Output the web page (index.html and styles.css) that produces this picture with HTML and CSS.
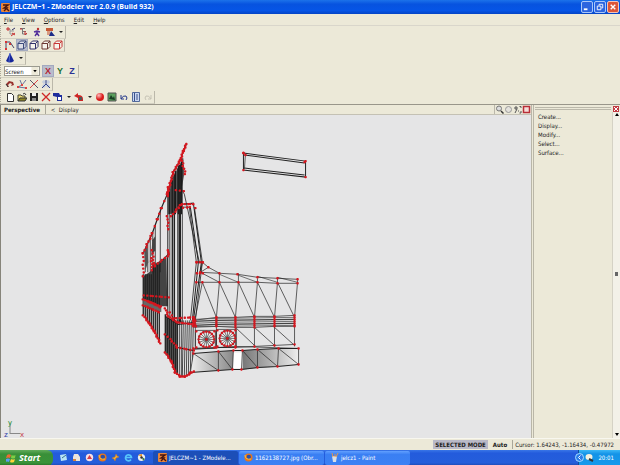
FILE: index.html
```
<!DOCTYPE html>
<html lang="en">
<head>
<meta charset="utf-8">
<title>JELCZM~1 - ZModeler</title>
<link rel="stylesheet" href="styles.css">
</head>
<body>
<svg class="defs" aria-hidden="true">
  <defs>
    <linearGradient id="panelA"><stop offset="0" stop-color="#eee"/><stop offset="1" stop-color="#888"/></linearGradient>
    <linearGradient id="panelB"><stop offset="0" stop-color="#777"/><stop offset="1" stop-color="#eee"/></linearGradient>
    <radialGradient id="ball" cx=".35" cy=".3"><stop offset="0" stop-color="#fbb"/><stop offset="1" stop-color="#d91c1c"/></radialGradient>
  </defs>
  <symbol id="app" viewBox="0 0 9 9"><rect width="9" height="9" rx="1" fill="#e8853a"/><path d="M2 2h5L3 5h3L3 8M6 6l2 2" stroke="#451510" stroke-width="1.4" fill="none"/></symbol>
  <symbol id="cube" viewBox="0 0 10 10"><path d="M1 3.500h5.500v5.500H1zM1 3.500L3.500 1H9L6.500 3.500M9 1v5.500L6.500 9" fill="#fff" fill-opacity=".5" stroke="currentColor"/></symbol>
  <symbol id="fire" viewBox="0 0 9 9"><circle cx="4.500" cy="4.500" r="4" fill="#e8771c"/><circle cx="4.800" cy="4" r="2.200" fill="#2b4fa8"/><path d="M1 2q0 5 6 4" stroke="#ffc23c" fill="none"/></symbol>
</svg>
<div class="app">
  <header class="title">
    <svg class="i9"><use href="#app"/></svg>
    <h1>JELCZM~1 - ZModeler ver 2.0.9 (Build 932)</h1>
    <button class="win" aria-label="Minimize"><svg viewBox="0 0 11 11"><path d="M2 8h4" stroke="#fff" stroke-width="2"/></svg></button>
    <button class="win" aria-label="Restore"><svg viewBox="0 0 11 11"><path d="M4.500 4V2.500h4v4H7M2.500 4.500h4v4h-4z" stroke="#fff" fill="none"/></svg></button>
    <button class="win close" aria-label="Close"><svg viewBox="0 0 11 11"><path d="M3 3l5 5M8 3L3 8" stroke="#fff" stroke-width="1.500"/></svg></button>
  </header>
  <nav class="menu">
    <button><u>F</u>ile</button><button><u>V</u>iew</button><button><u>O</u>ptions</button><button><u>E</u>dit</button><button><u>H</u>elp</button>
  </nav>
  <div class="bars">
    <div class="bar wide">
      <button aria-label="Vertex tree"><svg viewBox="0 0 10 10"><path d="M1 2h3v5h4M4 4h4" stroke="#999" fill="none"/><path d="M1 1h2v2H1zM6 6l3 2M5 9l4-3" stroke="#c33" fill="none"/><path d="M6 3l3-2" stroke="#336"/></svg></button>
      <button aria-label="Object tree"><svg viewBox="0 0 10 10"><path d="M1 1.500h5M3.500 2v5H8M3.500 4.500H7" stroke="#777" fill="none"/><path d="M1 2h2M6 4v4l2-2" stroke="#c33" fill="none"/></svg></button>
      <button aria-label="Bones"><svg viewBox="0 0 10 10"><circle cx="6" cy="2" r="1.200" fill="#b33"/><path d="M2 5l3-1 3 1M5 4v2L3 9M5 6l2 3" stroke="#53309b" stroke-width="1.400" fill="none"/></svg></button>
      <button aria-label="Materials"><svg viewBox="0 0 10 10"><path d="M1 1h7v3H1z" fill="#c65835"/><path d="M2 4h3v4H2z" fill="#d99a80"/><path d="M4 9l2-5 4 5z" fill="#1c2c87"/></svg></button>
      <span class="drop"></span>
    </div>
    <div class="bar">
      <button aria-label="Vertices"><svg viewBox="0 0 10 10"><path d="M1 9V2h4l4 6" stroke="#446" fill="none"/><path d="M0 1h2v2H0zM4 3h2v2H4zM0 8h2v2H0z" fill="#d33"/></svg></button>
      <button class="on" aria-label="Edges"><svg class="blue"><use href="#cube"/></svg></button>
      <button aria-label="Faces"><svg class="navy"><use href="#cube"/></svg></button>
      <button aria-label="Polygons"><svg class="brown"><use href="#cube"/></svg></button>
      <button aria-label="Objects"><svg class="red"><use href="#cube"/></svg></button>
    </div>
    <div class="bar">
      <button aria-label="Solid"><svg viewBox="0 0 10 10"><path d="M5 0L1 8q4 3 8 0z" fill="#16269a"/><path d="M5 0L4 9" stroke="#4c66cf"/></svg></button>
      <span class="drop"></span>
    </div>
    <div class="bar axes">
      <label class="combo"><select aria-label="Coordinate system"><option>Screen</option></select><svg viewBox="0 0 8 9"><path d="M0 0h8v9H0z" fill="#ece9d8"/><path d="M2 3.500h4L4 6z"/></svg></label>
      <button class="on x">X</button><button class="y">Y</button><button class="z">Z</button>
    </div>
    <div class="bar">
      <button aria-label="Magnet"><svg viewBox="0 0 10 10"><path d="M3 8L1 5l3-3 4 1 1 3-3 1 1-2-2-1-2 2 1 2z" fill="#97322e"/><path d="M1 5l2 3" stroke="#333"/></svg></button>
      <button aria-label="Snap vertex"><svg viewBox="0 0 10 10"><path d="M3 1l2 5 4-5M5 6L1 8l8 1" stroke="#66709b" fill="none"/><path d="M0 7h2v2H0zM8 8h2v2H8zM4 5h2v2H4z" fill="#d44"/></svg></button>
      <button aria-label="Snap edge"><svg viewBox="0 0 10 10"><path d="M1 1l8 8" stroke="#556"/><path d="M9 1L1 9" stroke="#d44"/></svg></button>
      <button aria-label="Snap grid"><svg viewBox="0 0 10 10"><path d="M1 3h8M1 7h8M3 1v8M7 1v8" stroke="#b9c6e0"/><path d="M5 1v4L1 9M5 5l4 4" stroke="#33448c" fill="none"/></svg></button>
    </div>
    <div class="bar">
      <button aria-label="New"><svg viewBox="0 0 10 10"><path d="M2.500 1.500h4l2 2v6h-6z" fill="#fff" stroke="#333"/></svg></button>
      <button aria-label="Open"><svg viewBox="0 0 10 10"><path d="M1 9V3h3l1 1h3v2" fill="#e7d774" stroke="#443"/><path d="M1 9l2-3h7L8 9z" fill="#8e8524" stroke="#333"/><path d="M6 2q2-2 3 1" stroke="#333" fill="none"/></svg></button>
      <button aria-label="Save"><svg viewBox="0 0 10 10"><path d="M1 1h8v8H1z" fill="#222"/><path d="M3 1h4v3H3z" fill="#eee"/><path d="M3 6h4v3H3z" fill="#888"/></svg></button>
      <button aria-label="Delete"><svg viewBox="0 0 10 10"><path d="M1 1l8 8M9 1L1 9" stroke="#cf2727" stroke-width="1.300"/></svg></button>
      <button aria-label="Import"><svg viewBox="0 0 10 10"><path d="M0 1h6l1 2h2v6H4V5L0 4z" fill="#1e2d9c"/><path d="M5 5h3v3H5z" fill="#fff"/></svg></button>
      <span class="drop"></span>
      <button aria-label="Export"><svg viewBox="0 0 10 10"><path d="M0 4l4-3v2q5 0 5 4v2H4V6z" fill="#cf2525"/><path d="M5 5h3v3H5z" fill="#555"/></svg></button>
      <span class="drop"></span>
      <button aria-label="Record"><svg viewBox="0 0 10 10"><circle cx="5" cy="5" r="4" fill="url(#ball)"/></svg></button>
      <button aria-label="Textures"><svg viewBox="0 0 10 10"><path d="M1 1h8v8H1z" fill="#5aa05d" stroke="#555"/><path d="M2 7l2-4 2 3 1-2 1 4z" fill="#173f24"/></svg></button>
      <button aria-label="Undo"><svg viewBox="0 0 10 10"><path d="M2 3v4h3M2 7q2-4 5-3 2 2 0 4" stroke="#24388b" fill="none"/></svg></button>
      <button aria-label="History"><svg viewBox="0 0 10 10"><path d="M1.500 .5h7v9h-7z" fill="#cad7f1" stroke="#52699b"/><path d="M3.500 1v8M5 3h2M5 5h2M5 7h2" stroke="#3a518a"/></svg></button>
      <button aria-label="Redo" disabled><svg viewBox="0 0 10 10"><path d="M8 3v4H5M8 7Q6 3 3 4 1 6 3 8" stroke="#c6c3b5" fill="none"/></svg></button>
    </div>
  </div>
  <div class="work">
    <main class="view">
      <div class="viewhead">
        <button class="persp">Perspective</button><button class="disp">&lt;&nbsp; Display</button>
        <div class="tools">
          <button aria-label="Zoom"><svg viewBox="0 0 9 9"><circle cx="4" cy="3.500" r="2.500" fill="#ddd" stroke="#777"/><path d="M6 6l2.500 2.500" stroke="#333" stroke-width="1.500"/></svg></button>
          <button aria-label="Pan"><svg viewBox="0 0 9 9"><circle cx="4.500" cy="4.500" r="3" fill="#e4e2dc" stroke="#999"/></svg></button>
          <button aria-label="Fit"><svg viewBox="0 0 9 9"><path d="M2 2h2v2H2zM4 4l-2 4M5 6h1M6.500 1.500h1.500v1.500M8 6v2H6.500" stroke="#555" fill="none"/></svg></button>
          <button aria-label="Maximize view"><svg viewBox="0 0 9 9"><path d="M1.500 1.500h6v6h-6z" fill="#f5dcd8" stroke="#b92d37" stroke-width="1.500"/></svg></button>
        </div>
      </div>
      <svg class="scene" viewBox="1 115 529 322" preserveAspectRatio="xMinYMax meet" role="img" aria-label="Wireframe model">
        <g id="mesh"></g>
        <path d="M10 422v11h10" stroke="#888" fill="none"/>
        <text x="8" y="424" fill="#3b9b4a">y</text><text x="20" y="436" fill="#c33945">x</text><text x="4" y="436" fill="#3546aa">z</text>
      </svg>
    </main>
    <aside class="side">
      <div class="sidehead"><span></span><button aria-label="Close panel"><svg viewBox="0 0 6 6"><path d="M1 1l4 4M5 1L1 5" stroke="#fff"/></svg></button></div>
      <div class="sidebody">
        <div class="cmds"><button>Create...</button><button>Display...</button><button>Modify...</button><button>Select...</button><button>Surface...</button></div>
        <div class="scroll"><svg viewBox="0 0 6 6"><path d="M1 4h4L3 1z"/></svg><i></i><svg viewBox="0 0 6 6"><path d="M1 2h4L3 5z"/></svg></div>
      </div>
    </aside>
  </div>
  <footer class="status"><b class="sel">SELECTED MODE</b><b>Auto</b><span class="cursor">Cursor: 1.64243, -1.16434, -0.47972</span></footer>
  <nav class="task">
    <button class="start"><svg viewBox="0 0 10 10"><path d="M1 2q2-1.500 4 0L4 5Q3 4 0 5z" fill="#ed6a35"/><path d="M5.500 2q2 1 4 0L9 5q-2 1-4 0z" fill="#7fce45"/><path d="M0 6q2-1 4 0L3 9Q2 8-1 9z" fill="#5a9cf5"/><path d="M5 6q2 1 4 0L8 9q-2 1-4 0z" fill="#ffd43a"/></svg>Start</button>
    <div class="quick">
      <button aria-label="Desktop"><svg viewBox="0 0 9 9"><path d="M1 2l6-1 1 6-6 1z" fill="#b9e3f6"/><path d="M3 5l4-3" stroke="#37738f"/></svg></button>
      <button aria-label="Mail"><svg viewBox="0 0 9 9"><path d="M2 1h4l2 3v4H1V4z" fill="#ece5db"/><path d="M1 6h3v2H1z" fill="#d7833b"/></svg></button>
      <button aria-label="Player"><svg viewBox="0 0 9 9"><circle cx="4.500" cy="4.500" r="3.700" fill="#f6dfe4"/><path d="M2 6l2.500-4L7 6z" fill="#d63b47"/></svg></button>
      <button aria-label="Firefox"><svg><use href="#fire"/></svg></button>
      <button aria-label="Winamp"><svg viewBox="0 0 9 9"><path d="M1 5l3-1 1-3 1 2 2 1-3 1-1 3-1-2z" fill="#ffb02d" stroke="#bf7929" stroke-width=".5"/></svg></button>
      <button aria-label="Internet Explorer"><svg viewBox="0 0 9 9"><path d="M7 6.500A3 3 0 1 1 7.500 4.500H2" stroke="#57c5fb" stroke-width="1.700" fill="none"/></svg></button>
      <button aria-label="Media"><svg viewBox="0 0 9 9"><circle cx="4.500" cy="4.500" r="3.600" fill="#eee"/><path d="M1 2l4-1v3z" fill="#e69124"/><path d="M5 4l3 2-2 2z" fill="#377d45"/><circle cx="4.500" cy="4.500" r="1.200" fill="#333"/></svg></button>
    </div>
    <button class="win-tab active"><svg><use href="#app"/></svg>JELCZM~1 - ZModele...</button>
    <button class="win-tab"><svg><use href="#fire"/></svg>1162138727.jpg (Obr...</button>
    <button class="win-tab"><svg viewBox="0 0 9 9"><path d="M2 3h5L6 9H3z" fill="#d8dfe7"/><path d="M3 4L2 0M5 4V1M6 4l2-4" stroke="#e2974c"/></svg>jelcz1 - Paint</button>
    <div class="tray"><button class="chev" aria-label="Show icons"><svg viewBox="0 0 9 9"><circle cx="4.500" cy="4.500" r="4" fill="#2b7ce8" stroke="#a6ddff"/><path d="M5.500 2.500l-2 2 2 2" stroke="#fff" fill="none"/></svg></button><svg viewBox="0 0 9 9"><ellipse cx="4" cy="4" rx="3.500" ry="3" fill="#f5f1df"/><path d="M4 6l4 2" stroke="#343639" stroke-width="2"/></svg><time>20:01</time></div>
  </nav>
</div>
<script src="mesh.js"></script>
</body>
</html>
```
FILE: styles.css
```
* { box-sizing: border-box; }
body { margin: 0; font: 6px/9px "DejaVu Sans Condensed", "DejaVu Sans", sans-serif; color: #222; background: #ece9d8; }
button, select { font: inherit; color: inherit; border: 0; padding: 0; margin: 0; background: none; }
svg { display: block; flex: none; }
.defs { position: absolute; width: 0; height: 0; }
.app { min-height: 100vh; display: flex; flex-direction: column; }

.title { height: 14px; display: flex; align-items: center; gap: 1px; padding: 0 1px; color: #fff; background: linear-gradient(#1c72ea, #0753df 30%, #0655e6 75%, #0444c5); }
.title h1 { flex: 1; margin: 0; padding-left: 1px; font: bold 7px/12px "Open Sans", sans-serif; }
.i9 { width: 9px; height: 9px; }
.win { width: 12px; height: 12px; border: 1px solid #a9c7f8; border-radius: 2px; background: #2c65df; }
.win.close { background: #dc5638; border-color: #f4c4b8; }
.win svg { width: 10px; height: 10px; }

.menu { height: 12px; display: flex; align-items: center; gap: 9px; padding-left: 4px; border-bottom: 1px solid #d9d6cb; }
.menu u { text-decoration-thickness: 1px; }

.bars { display: flex; flex-direction: column; align-items: flex-start; }
.bar { height: 13px; display: flex; align-items: center; padding: 0 0 0 3px; border-right: 1px solid #bbb8aa; border-bottom: 1px solid #d3d0c2; border-left: 1px dotted #aaa697; }
.bar button { width: 12px; height: 12px; display: grid; place-items: center; font: bold 9px/11px "Liberation Sans", sans-serif; }
.bar.wide button { width: 13px; }
.bar svg { width: 10px; height: 10px; }
.bar .on { background: #b9bdcc; outline: 1px solid #a3aabf; outline-offset: -1px; }
.drop { margin: 0 2px 0 3px; border: 2px solid transparent; border-top-color: #222; border-bottom: 0; }
.blue { color: #3b4b7c; } .navy { color: #30306b; } .brown { color: #6c3832; } .red { color: #c73434; }
.bar .x { color: #b32635; } .bar .y { color: #226f2f; } .bar .z { color: #2b3195; }
.combo { width: 36px; height: 10px; display: flex; align-items: center; background: #fff; border: 1px solid #9a9a90; margin-right: 2px; }
.combo select { flex: 1; min-width: 0; appearance: none; }
.combo svg { width: 8px; height: 8px; pointer-events: none; }

.work { flex: 1; display: flex; min-height: 0; border-top: 1px solid #99968a; }
.view { flex: 1; min-width: 0; display: flex; flex-direction: column; border-left: 1px solid #86847a; background: #e5e5e6; }
.viewhead { height: 10px; display: flex; align-items: center; background: #ece9d8; border-bottom: 1px solid #c4c1b4; }
.persp { font-weight: bold; padding: 0 5px 0 3px; border-right: 1px solid #aaa799; }
.disp { padding-left: 5px; }
.tools { margin-left: auto; display: flex; border-left: 1px solid #bbb8aa; }
.tools svg { width: 9px; height: 9px; }
.scene { flex: 1; width: 100%; height: 0; font: 8px "Liberation Sans", sans-serif; }
.side { width: 89px; border-left: 3px double #b9b6a8; display: flex; flex-direction: column; }
.sidehead { display: flex; align-items: center; gap: 2px; height: 7px; padding: 0 1px; }
.sidehead span { flex: 1; height: 3px; border: 1px solid #bbb8aa; border-width: 1px 0; }
.sidehead button { width: 6px; height: 6px; background: #c23a42; }
.sidebody { flex: 1; display: flex; justify-content: space-between; }
.cmds { display: flex; flex-direction: column; align-items: flex-start; padding-left: 4px; }
.cmds button { height: 9px; }
.scroll { width: 8px; display: flex; flex-direction: column; justify-content: space-between; align-items: center; border-left: 1px solid #d5d2c5; padding-bottom: 1px; background: #f3f1e8; }
.scroll svg { width: 6px; height: 6px; }
.scroll i { width: 3px; height: 4px; background: #666; }

.status { height: 12px; display: flex; justify-content: flex-end; align-items: center; gap: 3px; padding-right: 6px; border-top: 1px solid #f8f7ef; }
.status b { padding: 0 2px; }
.status .sel { background: #b9b9c7; }
.cursor { padding-left: 2px; border-left: 1px solid #aaa799; }

.task { height: 16px; display: flex; align-items: stretch; color: #fff; background: linear-gradient(#3976e7, #235bdc 20%, #245edb 80%, #1b47ad); }
.start { width: 53px; display: flex; align-items: center; gap: 3px; padding-left: 6px; font: italic bold 9px/14px "Open Sans", sans-serif; border-radius: 0 6px 6px 0; background: linear-gradient(#62ac5c, #398f38 25%, #3a9339 80%, #246d27); }
.start svg { width: 10px; height: 10px; }
.quick { width: 100px; display: flex; align-items: center; gap: 4px; padding-left: 6px; }
.quick svg, .win-tab svg, .tray svg { width: 9px; height: 9px; }
.win-tab { width: 85px; margin: 1px 1px 1px 0; display: flex; align-items: center; gap: 2px; padding-left: 5px; border-radius: 2px; white-space: nowrap; background: linear-gradient(#62a0ff, #3a7ff3 25%, #3c81f4); }
.win-tab.active { background: #1c4fb8; }
.tray { margin-left: auto; width: 42px; display: flex; align-items: center; gap: 1px; background: linear-gradient(#3cb8f7, #1493e7 25%, #159aec); border-left: 1px solid #104e9c; }
.chev { margin-left: -4px; }
.tray time { margin-left: auto; padding-right: 6px; }
```
FILE: mesh.js
```
const parts = [];
const dots = [];
const line = (pts, w = 1, c = '#222') => parts.push(`<polyline points="${pts.join(' ')}" fill="none" stroke="${c}" stroke-width="${w}"/>`);
const fill = (pts, c) => parts.push(`<polygon points="${pts.join(' ')}" fill="${c}"/>`);
const dot = (x, y) => dots.push(`<rect x="${x - 1.2}" y="${y - 1.2}" width="2.4" height="2.4" rx=".8"/>`);

// Value of y on a polyline at x
function yAt(pts, x) {
  for (let i = 1; i < pts.length; i++) {
    const [a, b] = pts[i - 1], [c, d] = pts[i];
    if (x <= c) return b + (d - b) * (x - a) / (c - a);
  }
  return pts[pts.length - 1][1];
}
// Vertices strung along a polyline, scattered slightly to either side
function string(pts, step) {
  for (let i = 1; i < pts.length; i++) {
    const [a, b] = pts[i - 1], [c, d] = pts[i];
    const n = Math.max(1, Math.round(Math.hypot(c - a, d - b) / step));
    for (let k = 0; k <= n; k++) dot(a + (c - a) * k / n + (k % 3 - 1) * .5, b + (d - b) * k / n);
  }
}

// Side wall of the body
const roof = [[143, 253], [147, 244], [152, 233], [157, 219], [161, 208], [167, 194], [170, 183], [173, 172], [180, 160], [183, 151], [186, 144]];
const sill = [[143, 315], [149, 323], [154, 331], [160, 343]];
fill([[143, 276], [152, 270], [154, 264], [166, 257], [167, 306], [160, 306], [143, 299]], '#444');
for (let x = 143; x < 161; x += 2) line([[x, x < 152 ? 274 : 264], [x, yAt(sill, x)]], 1.3);
for (const x of [145, 147.5, 150, 152.5, 155, 160]) line([[x, yAt(roof, x)], [x, 272]], .8);
line(roof, 1.2);
fill([[144, 251], [147, 244], [148, 262], [145, 270]], '#555');
fill([[152, 240], [155, 236], [155, 250], [151, 256]], '#444');
fill([[168, 190], [172, 178], [183, 158], [184, 174], [181, 190], [181, 206], [174, 213], [168, 214]], '#555');
for (const x of [169, 172, 175, 178, 181]) line([[x, yAt(roof, x) + 2], [x, 214]], 1.3, '#1a1a1a');
fill([[143, 299], [161, 306], [161, 312], [143, 305]], '#666');
line([[160, 262], [167, 255], [167, 306]]);
for (const [x, w] of [[167.5, 1], [169.5, .8], [172, 1.3], [174, 1.5], [177.5, 1], [179.5, 2.4], [182, .8]]) line([[x, yAt(roof, x) + 4], [x, 322]], w);

// Front corner
const low = [[165, 352], [171, 361], [175, 372], [180, 376], [185, 376], [193, 371]];
fill([[165, 316], [177, 322], [177, 374], [171, 361], [165, 352]], '#666');
for (let x = 165; x <= 193; x += 2) line([[x, x < 176 ? 314 + (x - 165) * .7 : 320], [x - (x > 182 ? 1 : 0), yAt(low, x)]], x < 178 ? 1.3 : .8);
line([[165, 334], [177, 347], [193, 350]]);
line([[165, 316], [178, 324], [193, 322]]);
line(low);

// Windscreen pillar
line([[178, 210], [182, 204], [193, 203], [201, 262], [193, 320]]);
line([[182, 207], [189, 207], [196, 262], [190, 320]], .8);
line([[181, 189], [184, 194], [199, 262]], .8);
line([[190, 207], [198, 262], [192, 320]]);
line([[194, 207], [202, 262], [195, 320]], .8);

// Front panels
const rows = [
  [[196, 262], [202, 262], [208, 267], [219, 273], [237, 274], [257, 277], [277, 278], [297, 279]],
  [[196, 282], [202, 282], [219, 282], [238, 282], [257, 282], [277, 283], [297, 283]],
  [[193, 320], [216, 317], [235, 317], [254, 316], [274, 316], [294, 315]],
  [[193, 326], [216, 326], [235, 327], [254, 327], [274, 326], [294, 326]],
  [[193, 348], [216, 347], [235, 347], [254, 346], [274, 345], [294, 344]]
];
fill([[193, 353], [218, 351], [233, 350], [232, 369], [190, 372]], 'url(#panelA)');
fill([[242, 350], [278, 348], [298, 348], [298, 364], [242, 369]], 'url(#panelB)');
fill([[233, 352], [242, 352], [242, 368], [233, 368]], '#fff');
rows.forEach(r => { line(r, .7); r.forEach(p => dot(...p)); });
for (let k = 0; k < 5; k++) line([[193, 319 + k * 2], [216, 318 + k * 2], [294, 317 + k * 2]], k % 2 ? 1.4 : .7, '#444');
for (const x of [193, 216, 235, 254, 274, 294]) for (let y = 317; y < 327; y += 2) dot(x, y);
line([[202, 262], [200, 272], [219, 282]], .7); dot(200, 272);
line([[200, 272], [208, 267]], .7);
line([[200, 272], [219, 273]], .7);
const tops = [202, 219, 238, 257, 277, 297], lows = [195, 216, 235, 254, 274, 294];
for (let i = 0; i < 6; i++) {
  line([[tops[i], 282], [lows[i], 317], [lows[i], 346]], .7);
  if (i) line([[tops[i], i < 3 ? 273 : 278], [tops[i], 282]], .7);
  if (i < 5) {
    line([[tops[i], 282], [lows[i + 1], 317]], .7);
    if (i > 1) line([[lows[i], 327], [lows[i + 1], 345]], .7);
    if (i) line([[tops[i], 273 + i], [tops[i + 1], 282]], .6);
  }
}
const lipTop = [[193, 353], [218, 351], [233, 350], [242, 350], [257, 349], [278, 348], [298, 348]];
const lipLow = [[190, 372], [218, 370], [232, 369], [241, 369], [257, 367], [277, 366], [298, 364]];
line(lipTop); line(lipLow);
line([[193, 349], [235, 346], [298, 348]], .7);
lipTop.forEach((p, i) => {
  line([p, lipLow[i]], .7);
  if (i < 6 && i !== 2) line([p, lipLow[i + 1]], .7);
  dot(...p); dot(...lipLow[i]);
});

// Headlights
for (const [cx, cy] of [[206, 339], [227, 338]]) {
  line([[cx - 11, cy - 9], [cx + 9, cy - 9], [cx + 9, cy + 9], [cx - 11, cy + 9], [cx - 11, cy - 9]], .7);
  parts.push(`<circle cx="${cx}" cy="${cy}" r="8" fill="#eee" stroke="#333"/>`);
  for (let a = 0; a < 16; a++) {
    const t = a * Math.PI / 8, c = Math.cos(t), s = Math.sin(t);
    line([[cx, cy], [cx + 7 * c, cy + 7 * s]], .6);
    dot(cx + 7.7 * c, cy + 7.7 * s);
  }
  for (const dx of [-10, 8]) for (const dy of [-8, 8]) dot(cx + dx, cy + dy);
  dots.push(`<circle cx="${cx}" cy="${cy}" r="1.3"/>`);
}

// Detached plate
const plate = [[243, 153], [305, 161], [305, 177], [243, 170], [243, 153]];
line(plate);
line([[244, 155], [304, 163]]); line([[244, 168], [304, 175]]); line([[245, 154], [244, 169]], .7);
plate.forEach(p => dot(...p)); dot(245, 155); dot(304, 162);

string(roof.slice(5), 2); string(roof.slice(0, 3), 3); string(roof.slice(2, 6), 7);
string([[181, 158], [183, 166], [185, 174]], 3);
string([[168, 187], [167, 196]], 2);
string([[143, 253], [143, 276]], 4); string([[152, 250], [154, 266]], 3); string([[152, 270], [151, 258]], 3);
string([[155, 265], [167, 256]], 3);
string([[167, 216], [168, 229]], 3); string([[171, 216], [180, 205], [182, 204], [193, 204], [195, 208]], 3);
string([[179, 208], [190, 207]], 4); string([[176, 190], [183, 191]], 3); string([[168, 250], [168, 254]], 2);
string([[143, 299], [150, 302], [160, 306]], 2); string([[143, 305], [159, 312]], 2);
string([[144, 295], [168, 297]], 3); string([[149, 301], [160, 307]], 2);
string(sill, 2); string(low, 2);
string([[165, 308], [168, 316], [177, 322], [193, 324]], 2);
string([[170, 312], [173, 318], [193, 317]], 3);
string([[165, 334], [172, 341], [177, 347], [193, 350]], 3);
string([[194, 317], [195, 326]], 2); string([[197, 262], [202, 262]], 3); string([[197, 273], [202, 273]], 3);

document.getElementById('mesh').innerHTML = parts.join('') + `<g fill="#d5171f">${dots.join('')}</g>`;
```
